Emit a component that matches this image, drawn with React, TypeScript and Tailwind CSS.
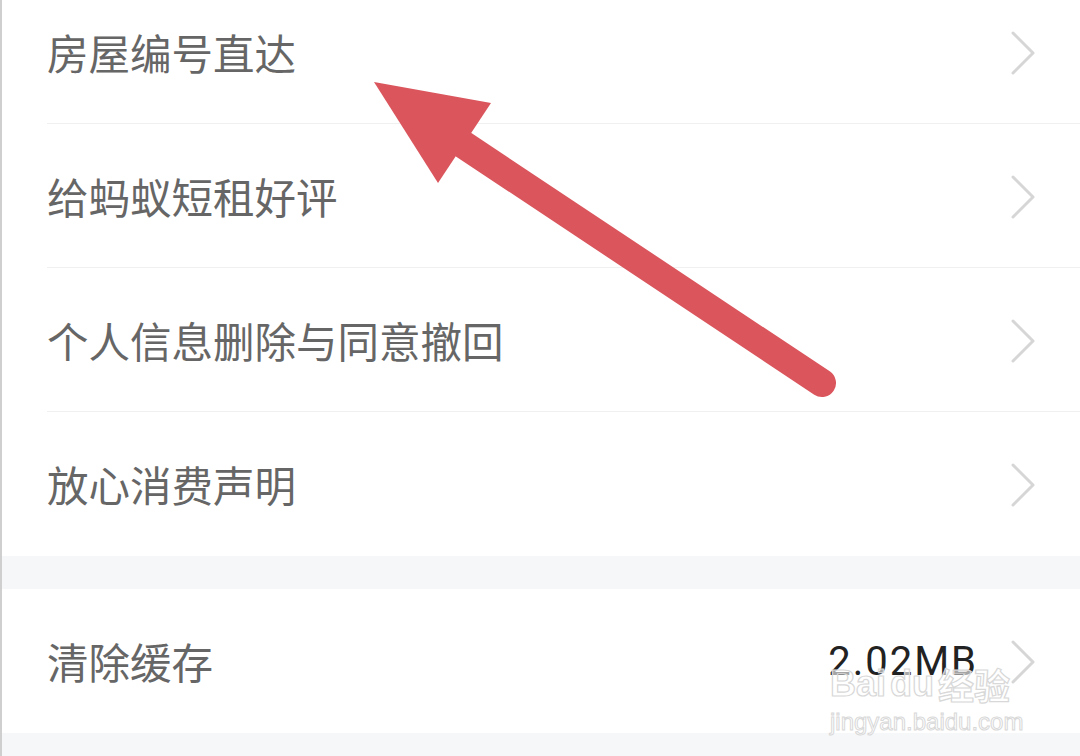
import React from 'react';

const cjk = { fontFamily: '"Noto Sans CJK SC", "Noto Sans", sans-serif' };

const Chevron = () => (
  <svg width="26" height="44" viewBox="0 0 26 44" className="shrink-0">
    <polyline points="3,2 23,22 3,42" fill="none" stroke="#d6d6d6" strokeWidth="3" strokeLinecap="round" strokeLinejoin="round" />
  </svg>
);

const items = ['房屋编号直达', '给蚂蚁短租好评', '个人信息删除与同意撤回', '放心消费声明'];

function Row({ label, last, right }: { label: string; last?: boolean; right?: React.ReactNode }) {
  return (
    <div className="pl-[45px] bg-white">
      <div className={`h-[144px] flex items-center pr-[44px] pt-[2px] ${last ? '' : 'border-b border-[#f0f0f0]'}`}>
        <span className="flex-1 text-[41.5px] text-[#666666] leading-none" style={cjk}>
          {label}
        </span>
        {right}
        <Chevron />
      </div>
    </div>
  );
}

export default function App() {
  return (
    <div className="relative w-[1080px] h-[756px] overflow-hidden bg-[#f6f7f9] border-l-2 border-[#cfcfcf]">
      <div className="-mt-[20px]">
        {items.map((label, i) => (
          <Row key={label} label={label} last={i === items.length - 1} />
        ))}
      </div>
      <div className="h-[33px]" />
      <div className="h-[143px]">
        <Row
          label="清除缓存"
          last
          right={
            <span
              className="mr-[32px] text-[40px] tracking-[2px] text-[#222222] leading-none"
              style={{ fontFamily: 'Roboto, "Liberation Sans", sans-serif' }}
            >
              2.02MB
            </span>
          }
        />
      </div>

      {/* watermark */}
      <div className="absolute left-[828px] top-[666px] flex flex-col select-none pointer-events-none">
        <div className="flex items-end gap-[4px] text-[36px] leading-none font-bold text-white/60 [-webkit-text-stroke:1.2px_#d8d8d8]" style={{ fontFamily: '"Liberation Sans", "Noto Sans CJK SC", sans-serif' }}>
          <span>Bai</span>
          <span>du</span>
          <span style={cjk}>经验</span>
        </div>
        <span className="mt-[8px] text-[24px] leading-none text-white/60 [-webkit-text-stroke:1px_#d8d8d8]" style={{ fontFamily: '"Liberation Sans", sans-serif' }}>
          jingyan.baidu.com
        </span>
      </div>

      {/* annotation arrow */}
      <svg className="absolute left-0 top-0 pointer-events-none" width="1080" height="756" viewBox="0 0 1080 756">
        <line x1="462" y1="145" x2="820" y2="383" stroke="#da555c" strokeWidth="28" strokeLinecap="round" />
        <polygon points="372,82 489,103 436,183" fill="#da555c" />
      </svg>
    </div>
  );
}
